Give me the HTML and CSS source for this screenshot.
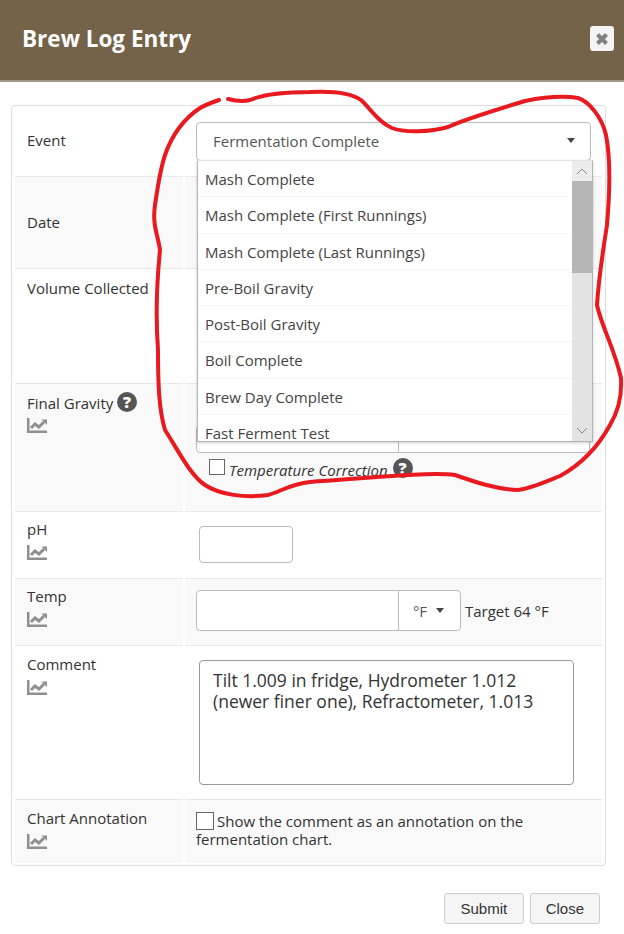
FILE: index.html
```html
<!DOCTYPE html>
<html lang="en">
<head>
<meta charset="utf-8">
<title>Brew Log Entry</title>
<link rel="stylesheet" href="styles.css">
</head>
<body>
<header class="modal-header">
  <h1>Brew Log Entry</h1>
  <button class="close-x" aria-label="Close">
    <svg viewBox="0 0 16 16" width="16" height="16"><path d="M3.500 3.500l9 9M12.500 3.500l-9 9" stroke="#808080" stroke-width="4" fill="none"/></svg>
  </button>
</header>
<main class="modal-body">
  <section class="panel">
    <div class="row row-event">
      <div class="label">Event</div>
      <div class="value">
        <div class="select select-main">
          <span>Fermentation Complete</span><i class="caret"></i>
        </div>
      </div>
    </div>
    <div class="row row-date alt">
      <div class="label">Date</div>
      <div class="value"></div>
    </div>
    <div class="row row-volume">
      <div class="label">Volume Collected</div>
      <div class="value"></div>
    </div>
    <div class="row row-gravity alt">
      <div class="label">
        <div>Final Gravity <span class="help">?</span></div>
        <svg class="chart" viewBox="0 0 20 15"><path class="axis" d="M1.200 0v13.800H20"/><path class="trend" d="M4 10l4-4 4 3 5-5"/><path class="tip" d="M14.500 1.500H20V7z"/></svg>
      </div>
      <div class="value gravity-value">
        <div class="input-group gravity-group"><div class="ig-left"></div><div class="ig-right"></div></div>
        <div class="temp-correct"><i class="check"></i><em>Temperature Correction</em><span class="help">?</span></div>
      </div>
    </div>
    <div class="row row-ph">
      <div class="label">
        <div>pH</div>
        <svg class="chart" viewBox="0 0 20 15"><path class="axis" d="M1.200 0v13.800H20"/><path class="trend" d="M4 10l4-4 4 3 5-5"/><path class="tip" d="M14.500 1.500H20V7z"/></svg>
      </div>
      <div class="value"><div class="ph-input"></div></div>
    </div>
    <div class="row row-temp alt">
      <div class="label">
        <div>Temp</div>
        <svg class="chart" viewBox="0 0 20 15"><path class="axis" d="M1.200 0v13.800H20"/><path class="trend" d="M4 10l4-4 4 3 5-5"/><path class="tip" d="M14.500 1.500H20V7z"/></svg>
      </div>
      <div class="value temp-value">
        <div class="input-group temp-group"><div class="ig-left"></div><div class="ig-unit">°F<i class="caret"></i></div></div>
        <span class="target">Target 64 °F</span>
      </div>
    </div>
    <div class="row row-comment">
      <div class="label">
        <div>Comment</div>
        <svg class="chart" viewBox="0 0 20 15"><path class="axis" d="M1.200 0v13.800H20"/><path class="trend" d="M4 10l4-4 4 3 5-5"/><path class="tip" d="M14.500 1.500H20V7z"/></svg>
      </div>
      <div class="value"><div class="comment-box">Tilt 1.009 in fridge, Hydrometer 1.012 (newer finer one), Refractometer, 1.013</div></div>
    </div>
    <div class="row row-annot alt">
      <div class="label">
        <div>Chart Annotation</div>
        <svg class="chart" viewBox="0 0 20 15"><path class="axis" d="M1.200 0v13.800H20"/><path class="trend" d="M4 10l4-4 4 3 5-5"/><path class="tip" d="M14.500 1.500H20V7z"/></svg>
      </div>
      <div class="value annot-value"><i class="check check-annot"></i>Show the comment as an annotation on the fermentation chart.</div>
    </div>
  </section>
  <footer class="actions">
    <button class="btn btn-submit">Submit</button>
    <button class="btn btn-close">Close</button>
  </footer>
</main>

<div class="dropdown">
  <ul class="options">
    <li>Mash Complete</li>
    <li>Mash Complete (First Runnings)</li>
    <li>Mash Complete (Last Runnings)</li>
    <li>Pre-Boil Gravity</li>
    <li>Post-Boil Gravity</li>
    <li>Boil Complete</li>
    <li>Brew Day Complete</li>
    <li>Fast Ferment Test</li>
  </ul>
  <div class="scrollbar">
    <div class="sb-up"><svg viewBox="0 0 12 8" width="12" height="8"><path d="M1 7l5-5 5 5" fill="none" stroke="#8a8a8a"/></svg></div>
    <div class="sb-thumb"></div>
    <div class="sb-track"></div>
    <div class="sb-down"><svg viewBox="0 0 12 8" width="12" height="8"><path d="M1 1l5 5 5-5" fill="none" stroke="#8a8a8a"/></svg></div>
  </div>
</div>

<svg class="scribble" viewBox="0 0 624 934" width="624" height="934">
  <path d="M228 99C236 101 243 102 250 100C262 95 285 92 310 92C330 91 350 92 361 100C370 108 378 122 392 128C405 133 430 132 448 127C465 119 495 110 525 101C545 97 565 96 578 98C590 102 602 118 606 135C611 160 610 190 607 225C603 250 599 275 597 305C601 325 615 350 621 378C622 395 619 410 610 425C598 447 580 465 560 476C545 482 530 489 518 490C495 489 475 482 455 475C430 472 380 477 310 482C290 484 280 492 268 495C245 498 220 495 205 485C190 475 178 450 165 430C159 410 158 385 158 350C155 310 158 270 160 250C158 235 152 225 155 205C158 185 160 170 165 155C172 135 185 118 200 108C207 104 213 102 219 100" fill="none" stroke="#e8191f" stroke-width="4" stroke-linecap="round"/>
</svg>
</body>
</html>
```
FILE: styles.css
```css
* { box-sizing: border-box; }
html, body { margin: 0; padding: 0; }
body {
  width: 624px;
  height: 934px;
  overflow: hidden;
  position: relative;
  background: #fff;
  color: #333;
  font: 15px/20px "Open Sans", sans-serif;
}
.modal-header {
  height: 82px;
  background: #746249;
  border-bottom: 2px solid #a39a8c;
  display: flex;
  align-items: center;
  justify-content: space-between;
  padding: 0 10px 0 22px;
}
.modal-header h1 {
  margin: 0 0 2px;
  color: #fff;
  font-size: 22.500px;
  line-height: 30px;
  font-weight: 700;
}
.close-x {
  width: 24px;
  height: 25px;
  margin-top: -3px;
  padding: 0;
  border: 0;
  border-radius: 3px;
  background: #f4f4f4;
  display: flex;
  align-items: center;
  justify-content: center;
}
.modal-body { padding: 23px 18px 0 11px; }
.panel {
  width: 595px;
  height: 761px;
  border: 1px solid #ddd;
  border-radius: 4px;
  padding: 0 3px;
}
.row {
  display: grid;
  grid-template-columns: 168px 1fr;
  column-gap: 2px;
}
.row .label, .row .value { border-top: 1px solid #e8e8e8; }
.row-event .label, .row-event .value { border-top: 0; }
.alt .label, .alt .value { background: #f9f9f9; }
.label { padding: 7px 12px 0; }
.chart { display: block; width: 20px; height: 15px; margin-top: 6px; }
.chart .axis { fill: none; stroke: #8f8f8f; stroke-width: 2.600; }
.chart .trend { fill: none; stroke: #8f8f8f; stroke-width: 3; }
.chart .tip { fill: #8f8f8f; }
.help {
  display: inline-block;
  width: 20px;
  height: 20px;
  border-radius: 50%;
  background: #555;
  color: #fff;
  font-weight: 800;
  font-size: 16px;
  line-height: 20px;
  text-align: center;
  vertical-align: top;
  margin-top: -1px;
}
.row-event { height: 70px; }
.row-event .label { padding-top: 24px; }
.row-event .value { padding: 16px 11px 0 11px; }
.select-main {
  height: 39px;
  padding: 0 15px 2px 16px;
  border: 1px solid #bbb;
  border-radius: 4px;
  display: flex;
  align-items: center;
  justify-content: space-between;
  background: #fff;
  color: #555;
}
.caret {
  display: inline-block;
  width: 0;
  height: 0;
  border-left: 4px solid transparent;
  border-right: 4px solid transparent;
  border-top: 5px solid #444;
}
.row-date { height: 92px; }
.row-date .label { padding-top: 35px; }
.row-volume { height: 115px; }
.row-volume .label { padding-top: 9px; }
.row-gravity { height: 128px; }
.row-gravity .label { padding-top: 9px; }
.row-gravity .chart { margin-top: 5px; }
.gravity-value { padding: 41px 12px 0 11px; }
.input-group {
  display: flex;
  height: 28px;
  border: 1px solid #bbb;
  border-radius: 4px;
  background: #fff;
}
.gravity-group { width: 394px; }
.ig-left { width: 202px; border-right: 1px solid #bbb; }
.temp-correct { margin: 6px 0 0 13px; display: flex; align-items: flex-start; }
.temp-correct em { margin: 1px 5px 0 4px; }
.temp-correct .help { margin-top: -1px; }
.check {
  display: block;
  flex: none;
  width: 16px;
  height: 16px;
  border: 1px solid #666;
  background: #fff;
}
.row-ph { height: 67px; }
.ph-input {
  width: 94px;
  height: 37px;
  margin: 14px 0 0 14px;
  border: 1px solid #bbb;
  border-radius: 4px;
  background: #fff;
}
.row-temp { height: 67px; }
.temp-value { display: flex; align-items: center; padding-left: 11px; padding-bottom: 3px; }
.temp-group { width: 265px; height: 41px; flex: none; }
.ig-unit {
  flex: 1;
  display: flex;
  align-items: center;
  justify-content: center;
  gap: 9px;
  color: #555;
  padding-right: 2px;
}
.target { margin-left: 4px; }
.row-comment { height: 154px; }
.row-comment .label { padding-top: 8px; }
.comment-box {
  width: 375px;
  height: 125px;
  margin: 14px 0 0 14px;
  border: 1px solid #999;
  border-radius: 4px;
  padding: 9px 13px;
  font-size: 17.500px;
  line-height: 21px;
  color: #333;
  background: #fff;
}
.row-annot { height: 64px; }
.row-annot .label { padding-top: 8px; }
.annot-value { padding: 12px 11px 0; line-height: 18px; }
.check-annot {
  display: inline-block;
  width: 18px;
  height: 18px;
  margin-right: 3px;
  vertical-align: top;
}
.actions {
  display: flex;
  justify-content: flex-end;
  gap: 6px;
  padding: 27px 6px 0 0;
}
.btn {
  height: 31px;
  padding: 0 15px;
  border: 1px solid #ccc;
  border-radius: 3px;
  background: #f5f5f5;
  color: #333;
  font: 15px "Liberation Sans", sans-serif;
}
.btn-submit { padding: 0 15.500px; }
.dropdown {
  position: absolute;
  left: 197px;
  top: 160px;
  width: 396px;
  height: 282px;
  background: #fff;
  border: 1px solid #b5b5b5;
  border-top-color: #e4e4e4;
  box-shadow: 0 1px 3px rgba(0, 0, 0, .2);
  display: flex;
  overflow: hidden;
}
.options { flex: 1; margin: 0; padding: 0; list-style: none; color: #444; }
.options li {
  height: 36.300px;
  padding: 8px 7px 0;
  border-bottom: 1px solid #f6f6f6;
  white-space: nowrap;
}
.scrollbar { width: 20px; flex: none; display: flex; flex-direction: column; background: #e3e3e3; }
.sb-up, .sb-down { height: 20px; display: flex; align-items: center; justify-content: center; }
.sb-up { background: #ececec; }
.sb-thumb { height: 92px; background: #b6b6b6; }
.sb-track { flex: 1; }
.scribble { position: absolute; left: 0; top: 0; pointer-events: none; }
```
